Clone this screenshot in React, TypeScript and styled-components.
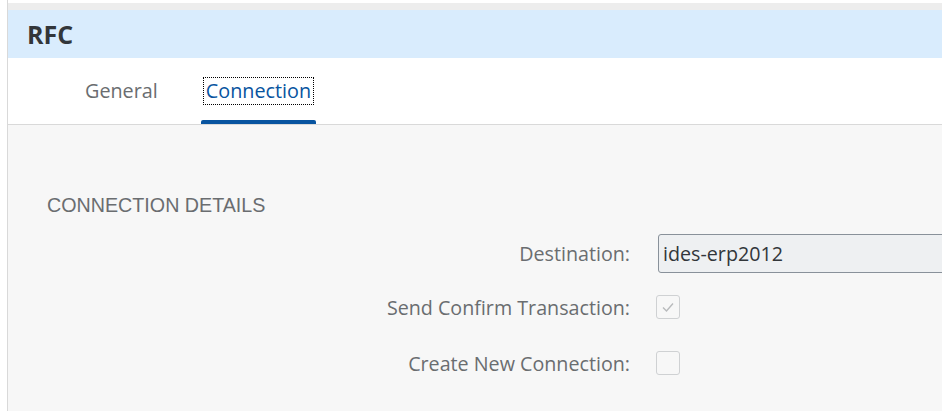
import React from "react";
import styled, { createGlobalStyle } from "styled-components";

const Global = createGlobalStyle`
  html, body { margin: 0; padding: 0; background: #ffffff; overflow: hidden; }
  body { font-family: "Open Sans", "Liberation Sans", Arial, sans-serif; }
  * { box-sizing: border-box; }
`;

const Frame = styled.div`
  margin-left: 7px;
  border-left: 1px solid #d9d9d9;
  padding-top: 3px;
  height: 411px;
  width: 935px;
  display: flex;
  flex-direction: column;
`;

const TopStrip = styled.div`
  height: 7px;
  background: #ededed;
`;

const Header = styled.div`
  height: 48px;
  background: #d9ecfd;
  display: flex;
  align-items: center;
  padding-left: 19px;
  font-size: 25px;
  font-weight: bold;
  color: #32363a;
`;

const TabBar = styled.div`
  height: 67px;
  background: #ffffff;
  border-bottom: 1px solid #d9d9d9;
  display: flex;
  padding-left: 77px;
  gap: 43px;
`;

const Tab = styled.div<{ $active?: boolean }>`
  position: relative;
  height: 100%;
  display: flex;
  align-items: flex-start;
  padding-top: 20px;
  padding-left: ${(p) => (p.$active ? "3px" : "0")};
  padding-right: ${(p) => (p.$active ? "3px" : "0")};
  font-size: 19.8px;
  color: ${(p) => (p.$active ? "#0854a0" : "#6a6d70")};
  &::after {
    content: "";
    display: ${(p) => (p.$active ? "block" : "none")};
    position: absolute;
    left: 0;
    right: 0;
    bottom: 0;
    height: 4px;
    border-radius: 2px 2px 0 0;
    background: #0854a0;
  }
`;

const TabLabel = styled.span<{ $focus?: boolean }>`
  outline: ${(p) => (p.$focus ? "1px dotted #000" : "none")};
  outline-offset: 0;
  padding: 0 ${(p) => (p.$focus ? "2px" : "0")};
  line-height: 26px;
`;

const Content = styled.div`
  flex: 1;
  background: #f7f7f7;
  padding-top: 68px;
`;

const SectionTitle = styled.div`
  padding-left: 39px;
  font-family: "Liberation Sans", Arial, sans-serif;
  font-size: 19.7px;
  color: #6a6d70;
  text-transform: uppercase;
  line-height: 24px;
`;

const Form = styled.div`
  margin-top: 16px;
  display: grid;
  grid-template-columns: 622px 300px;
  column-gap: 26px;
  row-gap: 0;
`;

const Label = styled.div<{ $h: number }>`
  height: ${(p) => p.$h}px;
  display: flex;
  align-items: center;
  justify-content: flex-end;
  font-size: 19.7px;
  color: #6a6d70;
  white-space: nowrap;
`;

const Cell = styled.div<{ $h: number }>`
  height: ${(p) => p.$h}px;
  display: flex;
  align-items: center;
`;

const Input = styled.div`
  margin-left: 2px;
  width: 320px;
  height: 39px;
  background: #eef0f2;
  border: 1px solid #89919a;
  border-radius: 3px;
  display: flex;
  align-items: center;
  padding-left: 4px;
  font-size: 19.7px;
  color: #32363a;
`;

const Checkbox = styled.div`
  width: 24px;
  height: 24px;
  border: 1px solid #cfd1d3;
  border-radius: 3px;
  display: flex;
  align-items: center;
  justify-content: center;
`;

export default function App() {
  return (
    <>
      <Global />
      <Frame>
        <TopStrip />
        <Header>RFC</Header>
        <TabBar>
          <Tab>
            <TabLabel>General</TabLabel>
          </Tab>
          <Tab $active>
            <TabLabel $focus>Connection</TabLabel>
          </Tab>
        </TabBar>
        <Content>
          <SectionTitle>Connection Details</SectionTitle>
          <Form>
            <Label $h={40}>Destination:</Label>
            <Cell $h={40}>
              <Input>ides-erp2012</Input>
            </Cell>
            <Label $h={68}>Send Confirm Transaction:</Label>
            <Cell $h={68}>
              <Checkbox>
                <svg width="14" height="12" viewBox="0 0 14 12">
                  <path d="M2 6.5 L5.5 10 L12 2.5" fill="none" stroke="#b8babc" strokeWidth="1.4" />
                </svg>
              </Checkbox>
            </Cell>
            <Label $h={44}>Create New Connection:</Label>
            <Cell $h={44}>
              <Checkbox />
            </Cell>
          </Form>
        </Content>
      </Frame>
    </>
  );
}
